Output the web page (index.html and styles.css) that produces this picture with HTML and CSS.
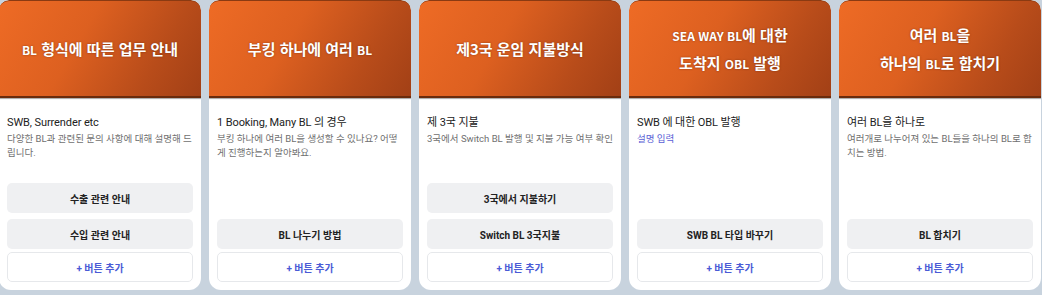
FILE: index.html
```html
<!DOCTYPE html>
<html lang="ko">
<head>
<meta charset="utf-8">
<title>BL 안내</title>
<link rel="stylesheet" href="styles.css">
</head>
<body>
<div class="row">
  <div class="card">
    <div class="head"><p><span class="lat">BL</span> 형식에 따른 업무 안내</p></div>
    <div class="body">
      <div class="title">SWB, Surrender etc</div>
      <div class="desc">다양한 BL과 관련된 문의 사항에 대해 설명해 드립니다.</div>
      <div class="btns">
        <div class="btn">수출 관련 안내</div>
        <div class="btn">수입 관련 안내</div>
        <div class="add">+ 버튼 추가</div>
      </div>
    </div>
  </div>
  <div class="card">
    <div class="head"><p>부킹 하나에 여러 <span class="lat">BL</span></p></div>
    <div class="body">
      <div class="title">1 Booking, Many BL 의 경우</div>
      <div class="desc">부킹 하나에 여러 BL을 생성할 수 있나요? 어떻게 진행하는지 알아봐요.</div>
      <div class="btns">
        <div class="btn">BL 나누기 방법</div>
        <div class="add">+ 버튼 추가</div>
      </div>
    </div>
  </div>
  <div class="card">
    <div class="head"><p>제3국 운임 지불방식</p></div>
    <div class="body">
      <div class="title">제 3국 지불</div>
      <div class="desc">3국에서 Switch BL 발행 및 지불 가능 여부 확인</div>
      <div class="btns">
        <div class="btn">3국에서 지불하기</div>
        <div class="btn">Switch BL 3국지불</div>
        <div class="add">+ 버튼 추가</div>
      </div>
    </div>
  </div>
  <div class="card">
    <div class="head"><p><span class="lat">SEA WAY BL</span>에 대한<br>도착지 <span class="lat">OBL</span> 발행</p></div>
    <div class="body">
      <div class="title">SWB 에 대한 OBL 발행</div>
      <div class="desc placeholder">설명 입력</div>
      <div class="btns">
        <div class="btn">SWB BL 타입 바꾸기</div>
        <div class="add">+ 버튼 추가</div>
      </div>
    </div>
  </div>
  <div class="card">
    <div class="head"><p>여러 <span class="lat">BL</span>을<br>하나의 <span class="lat">BL</span>로 합치기</p></div>
    <div class="body">
      <div class="title">여러 BL을 하나로</div>
      <div class="desc">여러개로 나누어져 있는 BL들을 하나의 BL로 합치는 방법.</div>
      <div class="btns">
        <div class="btn">BL 합치기</div>
        <div class="add">+ 버튼 추가</div>
      </div>
    </div>
  </div>
</div>
</body>
</html>
```

FILE: styles.css
```css
html, body {
  margin: 0;
  padding: 0;
  background: #c8d3de;
  width: 1042px;
  height: 295px;
  overflow: hidden;
}

body {
  font-family: Roboto, "Noto Sans CJK KR", sans-serif;
  color: #222;
}

.row {
  display: flex;
  gap: 8px;
  margin-left: -1px;
}

.card {
  width: 202px;
  flex: none;
  height: 290px;
  display: flex;
  flex-direction: column;
  background: #fff;
  border-radius: 10px 10px 12px 12px;
  overflow: hidden;
}

.head {
  height: 95px;
  flex: none;
  display: flex;
  align-items: center;
  justify-content: center;
  background: linear-gradient(120deg, #ee6b25 0%, #dd6020 40%, #b84c1a 75%, #a24016 100%);
  border-top: 1px solid #8a3a12;
  border-bottom: 2px solid #6a2b0c;
  box-shadow: 0 1px 1px rgba(0, 0, 0, 0.35);
  border-radius: 10px 10px 0 0;
  position: relative;
  z-index: 1;
}

.head p {
  margin: 0;
  color: #fff;
  font-family: "Noto Sans CJK KR", sans-serif;
  font-weight: 700;
  font-size: 15px;
  letter-spacing: 0;
  line-height: 27px;
  text-align: center;
  text-shadow: 0 0 2px rgba(80, 30, 5, 0.6);
}

.head .lat {
  font-size: 12px;
}

.body {
  flex: 1;
  display: flex;
  flex-direction: column;
  padding: 17px 8px 8px;
}

.title {
  font-size: 11px;
  line-height: 15px;
  color: #222;
  letter-spacing: -0.1px;
}

.desc {
  margin-top: 2px;
  font-size: 9.5px;
  line-height: 14px;
  color: #707070;
}

.desc.placeholder {
  color: #5b5fd6;
}

.btns {
  margin-top: auto;
  display: flex;
  flex-direction: column;
}

.btn {
  height: 30px;
  display: flex;
  align-items: center;
  justify-content: center;
  background: #eff0f2;
  border-radius: 5px;
  font-size: 10px;
  font-weight: 700;
  color: #222;
}

.btn + .btn {
  margin-top: 6px;
}

.add {
  margin-top: 3px;
  height: 28px;
  display: flex;
  align-items: center;
  justify-content: center;
  background: #fff;
  border: 1px solid #e6e8eb;
  border-radius: 5px;
  font-size: 10px;
  font-weight: 700;
  color: #4a5bd6;
}
```
